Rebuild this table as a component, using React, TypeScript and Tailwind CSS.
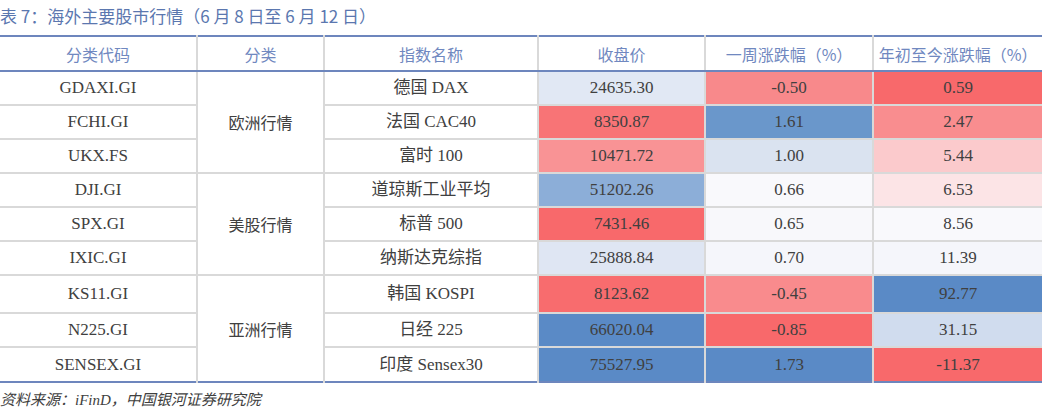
import React from 'react';

type Row = {
  code: string;
  name: string;
  close: string;
  week: string;
  ytd: string;
  bg: [string, string, string];
  h: string;
};

type Group = { label: string; rows: Row[] };

const groups: Group[] = [
  {
    label: '欧洲行情',
    rows: [
      { code: 'GDAXI.GI', name: '德国 DAX', close: '24635.30', week: '-0.50', ytd: '0.59', bg: ['bg-[#e1e8f4]', 'bg-[#f8898b]', 'bg-[#f8696b]'], h: 'h-[34px]' },
      { code: 'FCHI.GI', name: '法国 CAC40', close: '8350.87', week: '1.61', ytd: '2.47', bg: ['bg-[#f87476]', 'bg-[#6a97cb]', 'bg-[#f98d8f]'], h: 'h-[34px]' },
      { code: 'UKX.FS', name: '富时 100', close: '10471.72', week: '1.00', ytd: '5.44', bg: ['bg-[#f99395]', 'bg-[#dae3f0]', 'bg-[#fbcacc]'], h: 'h-[34px]' },
    ],
  },
  {
    label: '美股行情',
    rows: [
      { code: 'DJI.GI', name: '道琼斯工业平均', close: '51202.26', week: '0.66', ytd: '6.53', bg: ['bg-[#8caed8]', 'bg-[#f9f9fc]', 'bg-[#fce4e6]'], h: 'h-[34px]' },
      { code: 'SPX.GI', name: '标普 500', close: '7431.46', week: '0.65', ytd: '8.56', bg: ['bg-[#f8696b]', 'bg-[#f8f8fb]', 'bg-[#f9f9fc]'], h: 'h-[34px]' },
      { code: 'IXIC.GI', name: '纳斯达克综指', close: '25888.84', week: '0.70', ytd: '11.39', bg: ['bg-[#dfe6f3]', 'bg-[#f5f6fb]', 'bg-[#f5f6fb]'], h: 'h-[34px]' },
    ],
  },
  {
    label: '亚洲行情',
    rows: [
      { code: 'KS11.GI', name: '韩国 KOSPI', close: '8123.62', week: '-0.45', ytd: '92.77', bg: ['bg-[#f86c6e]', 'bg-[#f98b8d]', 'bg-[#5a8ac6]'], h: 'h-[38px]' },
      { code: 'N225.GI', name: '日经 225', close: '66020.04', week: '-0.85', ytd: '31.15', bg: ['bg-[#5a8ac6]', 'bg-[#f8696b]', 'bg-[#d0dcee]'], h: 'h-[34px]' },
      { code: 'SENSEX.GI', name: '印度 Sensex30', close: '75527.95', week: '1.73', ytd: '-11.37', bg: ['bg-[#5a8ac6]', 'bg-[#5a8ac6]', 'bg-[#f8696b]'], h: 'h-[35px]' },
    ],
  },
];

const headers = ['分类代码', '分类', '指数名称', '收盘价', '一周涨跌幅（%）', '年初至今涨跌幅（%）'];
const widths = ['w-[197px]', 'w-[127px]', 'w-[214px]', 'w-[167px]', 'w-[168px]', 'w-[169px]'];

const cell = 'border-2 border-[#d9d9d9] text-center p-0 align-middle';

export default function App() {
  return (
    <div
      className="w-[1048px] h-[410px] bg-white text-[#404040] overflow-hidden"
      style={{ fontFamily: '"Liberation Serif", "Noto Sans CJK SC", serif' }}
    >
      <div className="h-[35px] pt-[3px] text-[17px] leading-[25px] text-[#5b77af] whitespace-pre font-['Noto_Sans_CJK_SC',sans-serif]">
        表 7：海外主要股市行情（6 月 8 日至 6 月 12 日）
      </div>

      <table className="w-[1042px] border-collapse table-fixed text-[17px] border-t-2 border-t-[#6d86bd] border-b-2 border-b-[#6d86bd]">
        <thead>
          <tr className="h-[35px]">
            {headers.map((h, i) => (
              <th
                key={h}
                className={`${widths[i]} ${cell} border-t-0 border-b-2 border-b-[#6d86bd] font-normal text-[16px] text-[#7088c0] font-['Noto_Sans_CJK_SC',sans-serif] ${i === 0 ? 'border-l-0' : ''} ${i === 5 ? 'border-r-0' : ''}`}
              >
                {h}
              </th>
            ))}
          </tr>
        </thead>
        <tbody>
          {groups.map((g) =>
            g.rows.map((r, ri) => {
              const last = ri === 2 && g.label === '亚洲行情' ? 'border-b-0' : '';
              return (
                <tr key={r.code} className={r.h}>
                  <td className={`${cell} border-l-0 ${last}`}>{r.code}</td>
                  {ri === 0 && (
                    <td
                      rowSpan={3}
                      className={`${cell} text-[16px] font-['Noto_Sans_CJK_SC',sans-serif] ${g.label === '亚洲行情' ? 'border-b-0' : ''}`}
                    >
                      {g.label}
                    </td>
                  )}
                  <td className={`${cell} ${last}`}>{r.name}</td>
                  <td className={`${cell} ${r.bg[0]} ${last}`}>{r.close}</td>
                  <td className={`${cell} ${r.bg[1]} ${last}`}>{r.week}</td>
                  <td className={`${cell} border-r-0 ${r.bg[2]} ${last}`}>{r.ytd}</td>
                </tr>
              );
            })
          )}
        </tbody>
      </table>

      <div className="pt-[5px] text-[15px] italic text-[#404040] font-['Noto_Sans_CJK_SC',sans-serif]">
        资料来源：<span className="font-['Liberation_Serif',serif]">iFinD</span>，中国银河证券研究院
      </div>
    </div>
  );
}
